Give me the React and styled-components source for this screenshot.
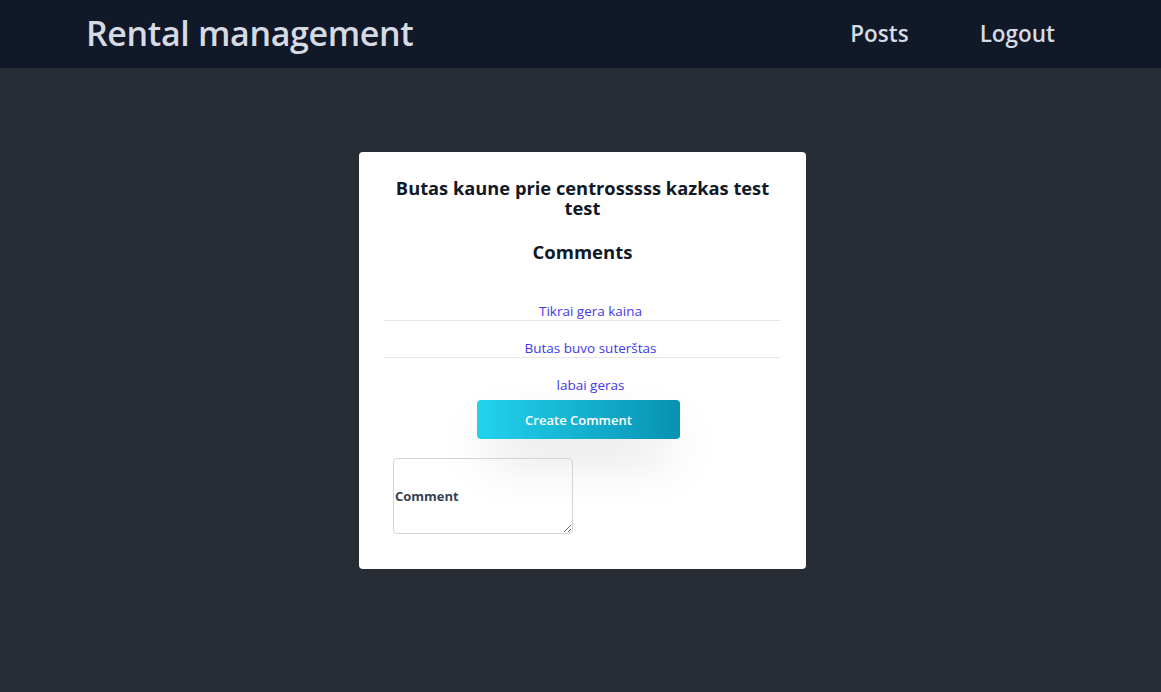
import React from "react";
import styled, { createGlobalStyle } from "styled-components";

const GlobalStyle = createGlobalStyle`
  html, body {
    margin: 0;
    padding: 0;
    background: #282c34;
    font-family: "Open Sans", "Noto Sans", sans-serif;
  }
  * { box-sizing: border-box; }
`;

const Header = styled.header`
  height: 68px;
  background: #111827;
  display: flex;
  align-items: center;
  justify-content: space-between;
  padding: 0 106px 0 86px;
`;

const Brand = styled.div`
  font-size: 34px;
  font-weight: 600;
  color: #d5dae3;
  letter-spacing: -0.35px;
  margin-top: -2px;
`;

const Nav = styled.nav`
  display: flex;
  gap: 71px;
  align-items: center;
  margin-top: -2px;
`;

const NavLink = styled.a`
  font-size: 22.5px;
  font-weight: 600;
  color: #d5dae3;
  text-decoration: none;
  cursor: pointer;
`;

const Main = styled.main`
  display: flex;
  justify-content: center;
  padding: 84px 0 0 4px;
`;

const Card = styled.section`
  width: 447px;
  background: #ffffff;
  border-radius: 4px;
  padding: 26px 25px 35px;
  text-align: center;
`;

const Title = styled.h2`
  margin: 0;
  font-size: 18.3px;
  line-height: 20px;
  font-weight: 700;
  color: #111827;
  padding: 0 4px;
`;

const SubTitle = styled.h3`
  margin: 22px 0 0;
  font-size: 18.5px;
  line-height: 24px;
  font-weight: 700;
  color: #111827;
`;

const CommentList = styled.ul`
  list-style: none;
  margin: 20px 0 0;
  padding: 0;
`;

const CommentItem = styled.li`
  font-size: 13.5px;
  font-weight: 500;
  line-height: 18px;
  color: #4338e8;
  padding: 18px 0 0 16px;
  border-bottom: ${(p) => (p.$last ? "none" : "1px solid #e5e7eb")};
  height: ${(p) => (p.$last ? "auto" : "37px")};
`;

const CreateButton = styled.button`
  display: block;
  width: 203px;
  height: 39px;
  margin: 6px auto 0;
  position: relative;
  left: -4px;
  border: none;
  border-radius: 4px;
  background: linear-gradient(to right, #22d3ee, #0891b2);
  color: #ffffff;
  font-family: inherit;
  font-size: 13px;
  font-weight: 600;
  box-shadow: 0 25px 50px -12px rgba(0, 0, 0, 0.25);
  cursor: pointer;
`;

const Field = styled.div`
  position: relative;
  width: 180px;
  margin: 19px 0 0 9px;
  text-align: left;
`;

const Label = styled.label`
  position: absolute;
  left: 2px;
  top: 28px;
  background: #ffffff;
  font-size: 13px;
  font-weight: 700;
  color: #374151;
  line-height: 20px;
`;

const TextArea = styled.textarea`
  display: block;
  width: 180px;
  height: 76px;
  border: 1px solid #d1d5db;
  border-radius: 4px;
  font-family: inherit;
  background: transparent;
`;

const comments = ["Tikrai gera kaina", "Butas buvo suterštas", "labai geras"];

export default function App() {
  return (
    <>
      <GlobalStyle />
      <Header>
        <Brand>Rental management</Brand>
        <Nav>
          <NavLink>Posts</NavLink>
          <NavLink>Logout</NavLink>
        </Nav>
      </Header>
      <Main>
        <Card>
          <Title>Butas kaune prie centrosssss kazkas test test</Title>
          <SubTitle>Comments</SubTitle>
          <CommentList>
            {comments.map((c, i) => (
              <CommentItem key={c} $last={i === comments.length - 1}>
                {c}
              </CommentItem>
            ))}
          </CommentList>
          <CreateButton>Create Comment</CreateButton>
          <Field>
            <TextArea id="comment" />
            <Label htmlFor="comment">Comment</Label>
          </Field>
        </Card>
      </Main>
    </>
  );
}
